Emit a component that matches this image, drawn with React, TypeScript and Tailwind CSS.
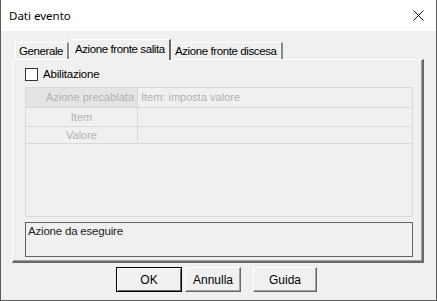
import React from "react";

const sans = { fontFamily: '"Liberation Sans", Arial, sans-serif' };

function Tab({ label, active, className }: { label: string; active?: boolean; className?: string }) {
    if (active) {
        return (
            <div
                className={
                    "relative z-10 -mb-px h-[21px] bg-[#f0f0f0] border-t border-l border-white border-r-2 border-r-[#696969] pl-[5px] pt-[2px] text-[11.5px] tracking-[-0.4px] text-black leading-[15px] whitespace-nowrap " +
                    (className ?? "")
                }
            >
                {label}
            </div>
        );
    }
    return (
        <div
            className={
                "h-[17px] bg-[#f0f0f0] border-t border-l border-white border-r-2 border-r-[#8a8a8a] pl-[3px] pt-[1px] text-[11.5px] tracking-[-0.4px] text-black leading-[15px] whitespace-nowrap " +
                (className ?? "")
            }
        >
            {label}
        </div>
    );
}

function Btn({ label, primary, className }: { label: string; primary?: boolean; className?: string }) {
    return (
        <div
            className={
                "h-[25px] flex items-center justify-center text-[12px] text-black " +
                (primary
                    ? "border border-black shadow-[inset_1px_1px_0_#ffffff,inset_-1px_-1px_0_#696969] "
                    : "border border-t-white border-l-white border-r-[#696969] border-b-[#696969] shadow-[inset_-1px_-1px_0_#a0a0a0] ") +
                (className ?? "")
            }
        >
            {label}
        </div>
    );
}

export default function App() {
    return (
        <div style={sans} className="w-[437px] h-[301px] flex flex-col bg-[#f0f0f0] border-x border-b border-[#5c5c5c]">
            {/* title bar */}
            <div className="h-[31px] bg-white flex items-center justify-between pl-[8px] pr-[12px]">
                <span className="text-[11.5px] text-black" style={{ fontFamily: '"Noto Sans", "Liberation Sans", sans-serif' }}>
                    Dati evento
                </span>
                <svg width="11" height="11" viewBox="0 0 11 11">
                    <path d="M0.5 0.5 L10.5 10.5 M10.5 0.5 L0.5 10.5" stroke="#111" strokeWidth="1" />
                </svg>
            </div>

            {/* tabs */}
            <div className="flex items-end ml-[14px] mt-[8px]">
                <Tab label="Generale" className="w-[54px]" />
                <Tab label="Azione fronte salita" active className="w-[102px]" />
                <Tab label="Azione fronte discesa" className="w-[112px]" />
            </div>

            {/* panel */}
            <div className="ml-[11px] w-[412px] h-[204px] border-t border-l border-white border-r-2 border-b-2 border-r-[#696969] border-b-[#696969] shadow-[inset_-1px_-1px_0_#a0a0a0] pl-[12px] pt-[8px] flex flex-col">
                <div className="flex items-center h-[13px]">
                    <div className="w-[13px] h-[13px] bg-white border border-[#333333]" />
                    <span className="ml-[5px] text-[11.5px] tracking-[-0.2px] text-black">Abilitazione</span>
                </div>

                <div className="mt-[6px] w-[388px] h-[130px] border border-[#dadada] flex flex-col text-[11px] text-[#b2b2b2]">
                    <div className="flex h-[20px] border-b border-[#dadada]">
                        <div className="w-[112px] bg-[#e4e4e4] border-r border-[#dadada] flex items-center justify-end pr-[3px]">
                            Azione precablata
                        </div>
                        <div className="flex-1 flex items-center pl-[3px]">Item: imposta valore</div>
                    </div>
                    <div className="flex h-[19px] border-b border-[#dadada]">
                        <div className="w-[112px] border-r border-[#dadada] flex items-center justify-center">Item</div>
                        <div className="flex-1" />
                    </div>
                    <div className="flex h-[17px] border-b border-[#dadada]">
                        <div className="w-[112px] border-r border-[#dadada] flex items-center justify-center">Valore</div>
                        <div className="flex-1" />
                    </div>
                </div>

                <div className="mt-[5px] w-[388px] h-[35px] border border-[#646464] px-[2px] pt-[1px] text-[11.5px] tracking-[-0.2px] text-[#222] leading-[14px]">
                    Azione da eseguire
                </div>
            </div>

            {/* buttons */}
            <div className="flex mt-[4px] ml-[115px]">
                <Btn label="OK" primary className="w-[66px]" />
                <Btn label="Annulla" className="w-[56px] ml-[3px]" />
                <Btn label="Guida" className="w-[64px] ml-[12px]" />
            </div>
        </div>
    );
}
